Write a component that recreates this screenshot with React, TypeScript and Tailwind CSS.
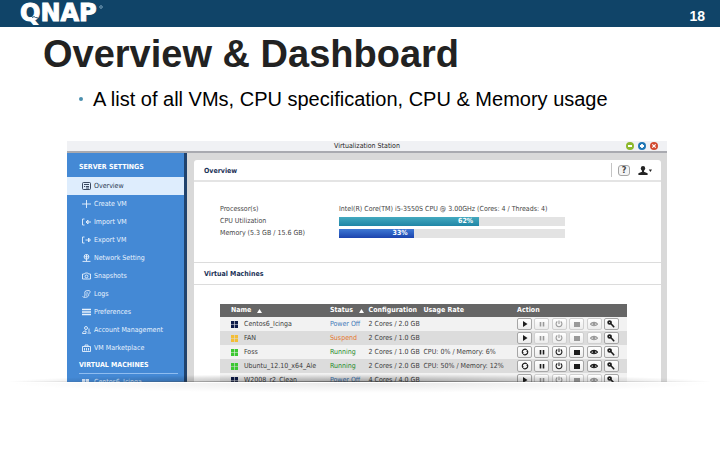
import type { ReactNode } from "react";
import { clsx } from "clsx";

type VmState = "Power Off" | "Suspend" | "Running";

interface Vm {
  name: string;
  state: VmState;
  config: string;
  usage?: string;
}

const VMS: Vm[] = [
  { name: "Centos6_Icinga", state: "Power Off", config: "2 Cores / 2.0 GB" },
  { name: "FAN", state: "Suspend", config: "2 Cores / 1.0 GB" },
  { name: "Foss", state: "Running", config: "2 Cores / 1.0 GB", usage: "CPU: 0% / Memory: 6%" },
  { name: "Ubuntu_12.10_x64_Ale", state: "Running", config: "2 Cores / 2.0 GB", usage: "CPU: 50% / Memory: 12%" },
  { name: "W2008_r2_Clean", state: "Power Off", config: "4 Cores / 4.0 GB" },
];

const STATE_TEXT: Record<VmState, string> = {
  "Power Off": "text-[#3f78b8]",
  Suspend: "text-[#e5772e]",
  Running: "text-[#1f8a2b]",
};

const STATE_ICON: Record<VmState, string> = {
  "Power Off": "text-[#0d1b4a]",
  Suspend: "text-[#f3bd35]",
  Running: "text-[#3cc832]",
};

const NAV: { label: string; icon: ReactNode }[] = [
  {
    label: "Overview",
    icon: (
      <>
        <rect x="0.5" y="0.5" width="8" height="7" rx="1" />
        <path d="M2 2.5h5M2 4.5h1.2M4 4.5h3M4 6h3" />
      </>
    ),
  },
  { label: "Create VM", icon: <path d="M4.5 0v8M0 4h9" /> },
  { label: "Import VM", icon: <path d="M2.5 1H.5v6h2M9 4H4M6 2 4 4l2 2M6 2v4" /> },
  { label: "Export VM", icon: <path d="M2.5 1H.5v6h2M3.5 4H8M6.5 2l2 2-2 2M6.5 2v4" /> },
  {
    label: "Network Setting",
    icon: (
      <>
        <circle cx="4.5" cy="2.8" r="2.4" />
        <path d="M2 2.8h5M4.5.4v6.8M.5 7.4h8" />
      </>
    ),
  },
  {
    label: "Snapshots",
    icon: (
      <>
        <path d="M.5 2h2l.7-1h2.6l.7 1h2v5h-8z" />
        <circle cx="4.5" cy="4.4" r="1.4" />
      </>
    ),
  },
  {
    label: "Logs",
    icon: (
      <path d="M3 1.5C4 .3 8 .3 8.2 1.4 8.4 3 6 3.5 6.8 5.5M3 1.5c-.8 1.5.8 3-.5 5M.5 6.5c1 1.3 5 1.3 6.3-1M4.2 3H6M4 5h1.5" />
    ),
  },
  { label: "Preferences", icon: <path d="M0 1.5h9M0 4h9M0 6.5h9" strokeWidth="1.5" /> },
  {
    label: "Account Management",
    icon: (
      <>
        <circle cx="4" cy="2" r="1.5" />
        <path d="M.5 7.5C.7 5.500 2 5 4 5v2.500zM7 2.500V6M5.500 7H9" />
      </>
    ),
  },
  { label: "VM Marketplace", icon: <path d="M.5 2.5h8v5h-8zM3 2.5V1h3v1.5M2.5 4v2.5M4.5 4v2.5M6.5 4v2.5" /> },
];

const ACTIONS: { label: string; icon: ReactNode }[] = [
  { label: "Pause", icon: <path d="M2.5 2v4.5M5.5 2v4.5" strokeWidth="1.6" /> },
  { label: "Shut down", icon: <path d="M2.3 1.5a2.9 2.9 0 1 0 3.4 0M4 .5v3.6" /> },
  { label: "Stop", icon: <rect x="1" y="2" width="6" height="5" fill="currentColor" stroke="none" /> },
  {
    label: "View",
    icon: (
      <>
        <path d="M.4 4.2C2 1.8 6 1.8 7.6 4.2 6 6.2 2 6.2.4 4.2z" />
        <circle cx="4" cy="4" r="1.5" fill="currentColor" stroke="none" />
      </>
    ),
  },
];

function Logo() {
  return (
    <svg width="100" height="27" viewBox="0 0 100 27" role="img" aria-label="QNAP">
      <text
        x="0"
        y="21"
        className="fill-white stroke-white font-['DejaVu_Sans'] text-[24px] leading-none font-bold"
        strokeWidth="1"
      >
        QNAP
      </text>
      <path d="M10 15.5q2 0 2.5 2 1.5-2 3 0 2-1 4.5 3" fill="none" stroke="#104468" strokeWidth="0.9" />
      <circle cx="81" cy="7" r="1.3" fill="none" stroke="#9fc0d4" strokeWidth="0.7" />
    </svg>
  );
}

function NavIcon({ children }: { children: ReactNode }) {
  return (
    <svg width="9" height="8" viewBox="0 0 9 8" fill="none" stroke="currentColor" strokeWidth="0.9" className="shrink-0">
      {children}
    </svg>
  );
}

function NavItem({ label, icon, active }: { label: string; icon: ReactNode; active?: boolean }) {
  return (
    <li>
      <a
        href="#"
        className={clsx(
          "flex h-[18px] items-center gap-[3px] pl-[15px] leading-none",
          active ? "bg-[#deedfd] text-[#26364e]" : "text-[#e8f2fd]",
        )}
      >
        <NavIcon>{icon}</NavIcon>
        {label}
      </a>
    </li>
  );
}

function OsIcon({ className }: { className?: string }) {
  return (
    <svg width="7" height="7" viewBox="0 0 7 7" fill="currentColor" className={className}>
      <path d="M0 0h3.2v3.2H0zM3.8 0H7v3.2H3.8zM0 3.8h3.2V7H0zM3.8 3.8H7V7H3.8z" />
    </svg>
  );
}

function ActionButton({ label, disabled, children }: { label: string; disabled?: boolean; children: ReactNode }) {
  return (
    <button
      type="button"
      aria-label={label}
      disabled={disabled}
      className={clsx(
        "flex h-[12px] w-[15px] items-center justify-center rounded-[2px] border bg-linear-to-b from-white to-[#ececec]",
        disabled ? "border-[#cfcfcf] text-[#999]" : "border-[#a6a6a6] text-[#1d1d1d]",
      )}
    >
      <svg width="8" height="8" viewBox="0 0 8 8" fill="none" stroke="currentColor" strokeWidth="1.1">
        {children}
      </svg>
    </button>
  );
}

function VmActions({ running }: { running: boolean }) {
  return (
    <div className="mr-[8px] flex justify-between">
      <ActionButton label={running ? "Restart" : "Start"}>
        {running ? (
          <>
            <path d="M5.8 1.9A2.6 2.6 0 0 0 1.7 5M2.2 6.1A2.6 2.6 0 0 0 6.3 3" />
            <path d="M.6 4.4H3L1.6 6.3zM7.4 3.6H5l1.4-1.9z" fill="currentColor" stroke="none" />
          </>
        ) : (
          <path d="M2 1l4.5 3L2 7z" fill="currentColor" stroke="none" />
        )}
      </ActionButton>
      {ACTIONS.map((a) => (
        <ActionButton key={a.label} label={a.label} disabled={!running}>
          {a.icon}
        </ActionButton>
      ))}
      <ActionButton label="Settings">
        <circle cx="2.6" cy="2.5" r="1.4" strokeWidth="1.8" />
        <path d="M3.7 3.6 7.2 7.2M5.2 6.3l1.2-1.2" strokeWidth="1.5" />
      </ActionButton>
    </div>
  );
}

function Meter({ value, barClass }: { value: number; barClass: string }) {
  return (
    <div className="h-[9px] w-[226px] bg-[#e3e3e3]">
      <div
        className={clsx("flex h-full items-center justify-end pr-[6px] leading-none font-bold text-white", barClass)}
        style={{ width: `${value}%` }}
      >
        {value}%
      </div>
    </div>
  );
}

function SortArrow() {
  return (
    <svg width="5" height="4" viewBox="0 0 5 4" fill="currentColor">
      <path d="M2.5 0 5 4H0z" />
    </svg>
  );
}

function Sidebar() {
  return (
    <nav className="w-[120px] shrink-0 border-r-[3px] border-[#21436d] bg-[#4489d5]">
      <h2 className="flex h-[24px] items-center pt-[5px] pl-[12px] font-bold text-white">SERVER SETTINGS</h2>
      <ul>
        {NAV.map((n, i) => (
          <NavItem key={n.label} {...n} active={i === 0} />
        ))}
      </ul>
      <h2 className="mr-[6px] ml-[12px] flex h-[17px] items-center border-b border-[#8fbdf0] font-bold text-white">
        VIRTUAL MACHINES
      </h2>
      <a href="#" className="flex h-[16px] items-center gap-[3px] pl-[15px] text-[#d5e6fa]">
        <OsIcon className="mr-[2px]" />
        Centos6_Icinga
      </a>
    </nav>
  );
}

function Toolbar() {
  return (
    <div className="flex items-center border-l border-[#c4c4c4] pl-[6px]">
      <button
        type="button"
        aria-label="Help"
        className="flex h-[11px] w-[12px] items-center justify-center rounded-[3px] border border-[#a5a5a5] bg-[#f4f4f4] text-[9px] leading-none font-bold text-[#444]"
      >
        ?
      </button>
      <button type="button" aria-label="Account" className="ml-[8px]">
        <svg width="15" height="9" viewBox="0 0 15 9" fill="#242424">
          <ellipse cx="5" cy="2.4" rx="2.2" ry="2.4" />
          <path d="M4 4h2v1.8l3.6 1.4V9H.4V7.2L4 5.8zM10.8 3.5H14L12.4 6z" />
        </svg>
      </button>
    </div>
  );
}

function VmTable() {
  return (
    <table className="w-full table-fixed border-collapse text-left text-[#3c3c3c]">
      <thead>
        <tr className="h-[13px] bg-[#666] text-white">
          <th className="w-[27%] pl-[11px]">
            <span className="flex items-center gap-[6px]">
              Name <SortArrow />
            </span>
          </th>
          <th className="w-[9.5%]">
            <span className="flex items-center gap-[6px]">
              Status <SortArrow />
            </span>
          </th>
          <th className="w-[13.5%]">Configuration</th>
          <th className="w-[23%]">Usage Rate</th>
          <th className="w-[27%]">Action</th>
        </tr>
      </thead>
      <tbody>
        {VMS.map((vm) => (
          <tr key={vm.name} className="h-[14px] odd:bg-[#f2f2f2] even:bg-[#dcdcdc]">
            <td className="pl-[11px]">
              <span className="flex items-center gap-[6px]">
                <OsIcon className={STATE_ICON[vm.state]} />
                {vm.name}
              </span>
            </td>
            <td className={STATE_TEXT[vm.state]}>{vm.state}</td>
            <td>{vm.config}</td>
            <td>{vm.usage}</td>
            <td>
              <VmActions running={vm.state === "Running"} />
            </td>
          </tr>
        ))}
      </tbody>
    </table>
  );
}

function Station() {
  return (
    <section className="max-h-[241px] overflow-hidden font-['DejaVu_Sans_Condensed','Open_Sans',sans-serif] text-[7px] leading-[9px]">
      <header className="grid h-[12px] grid-cols-[1fr_auto_1fr] items-center border-b-2 border-[#a9aab0] bg-[#f0f1f4] text-[#222]">
        <h2 className="col-start-2">Virtualization Station</h2>
        <div className="mr-[9px] flex gap-[4px] justify-self-end">
          <button type="button" aria-label="Minimize">
            <svg width="8" height="8" viewBox="0 0 8 8" className="block">
              <circle cx="4" cy="4" r="4" fill="#8cb82b" />
              <path d="M2 4h4" stroke="#fff" strokeWidth="2" />
            </svg>
          </button>
          <button type="button" aria-label="Maximize">
            <svg width="8" height="8" viewBox="0 0 8 8" className="block">
              <circle cx="4" cy="4" r="4" fill="#1f76b5" />
              <path d="M4 2v4M2 4h4" stroke="#fff" strokeWidth="1.8" />
            </svg>
          </button>
          <button type="button" aria-label="Close">
            <svg width="8" height="8" viewBox="0 0 8 8" className="block">
              <circle cx="4" cy="4" r="4" fill="#d2492f" />
              <path d="m2.3 2.3 3.4 3.4m0-3.4L2.3 5.7" stroke="#fff" strokeWidth="1.2" />
            </svg>
          </button>
        </div>
      </header>
      <div className="flex">
        <Sidebar />
        <div className="flex-1 bg-[#d9d9d9] pt-[7px] pr-[6px] pl-[7px]">
          <div className="rounded-t-[3px] bg-white">
            <div className="flex h-[22px] items-stretch justify-between border-b-2 border-[#e4e4e4] py-[3px] pr-[8px] pl-[10px]">
              <h3 className="flex items-center pt-[2px] font-bold text-[#1c3358]">Overview</h3>
              <Toolbar />
            </div>
            <dl className="grid h-[80px] grid-cols-[119px_1fr] content-start gap-y-[3px] pt-[23px] pl-[26px] text-[#444]">
              <dt>Processor(s)</dt>
              <dd>Intel(R) Core(TM) i5-3550S CPU @ 3.00GHz (Cores: 4 / Threads: 4)</dd>
              <dt>CPU Utilization</dt>
              <dd>
                <Meter value={62} barClass="bg-linear-to-b from-[#43a9bf] to-[#1f86a6]" />
              </dd>
              <dt>Memory (5.3 GB / 15.6 GB)</dt>
              <dd>
                <Meter value={33} barClass="bg-linear-to-b from-[#3f78d4] to-[#1c43ae]" />
              </dd>
            </dl>
            <h3 className="flex h-[23px] items-center border-y border-[#dcdcdc] pt-[2px] pl-[10px] font-bold text-[#1c3358]">
              Virtual Machines
            </h3>
            <div className="pt-[19px] pr-[34px] pl-[26px]">
              <VmTable />
            </div>
          </div>
        </div>
      </div>
    </section>
  );
}

// Soft edge across the bottom of the window, fading out to both sides
function Shelf() {
  return (
    <div className="relative h-px bg-white">
      <div className="absolute inset-x-2 bottom-px h-px bg-linear-to-r from-transparent via-[#555]/60 to-transparent" />
      <div className="absolute inset-x-2 bottom-px h-[8px] bg-[radial-gradient(ellipse_50%_100%_at_50%_100%,rgba(0,0,0,0.35),transparent)]" />
      <div className="absolute inset-x-2 top-px h-[10px] bg-[radial-gradient(ellipse_50%_100%_at_50%_0%,rgba(0,0,0,0.09),transparent)]" />
    </div>
  );
}

export default function App() {
  return (
    <div className="min-h-screen bg-white font-['Liberation_Sans',Arial,sans-serif]">
      <header className="flex h-[27px] items-center justify-between bg-[#104468] pr-[15px] pl-[20px]">
        <Logo />
        <span className="pt-[5px] text-[14px] leading-none font-bold text-white">18</span>
      </header>
      <h1 className="pt-[4px] pl-[43px] text-[38px] leading-[46px] font-bold text-[#222]">Overview &amp; Dashboard</h1>
      <ul className="pt-[11px] pl-[79px]">
        <li className="flex items-center text-[20px] leading-[22px] text-black">
          <span className="mr-[10px] size-[4px] rounded-full bg-[#4b8fae]" />
          A list of all VMs, CPU specification, CPU &amp; Memory usage
        </li>
      </ul>
      <div className="pt-[31px] pr-[53px] pl-[67px]">
        <Station />
      </div>
      <Shelf />
    </div>
  );
}
